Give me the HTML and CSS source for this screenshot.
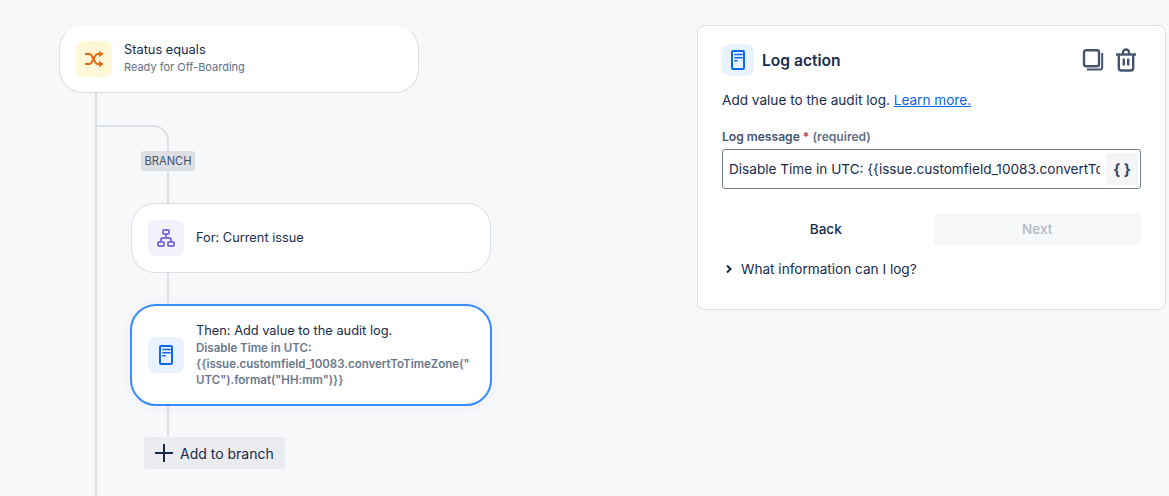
FILE: index.html
```html
<!DOCTYPE html>
<html lang="en">
<head>
<meta charset="utf-8">
<title>Log action</title>
<link rel="stylesheet" href="styles.css">
</head>
<body>
<main class="page">
  <section class="flow">
    <span class="line trunk"></span>
    <span class="line elbow"></span>
    <span class="line drop-a"></span>
    <span class="chip">BRANCH</span>

    <div class="node node-status">
      <span class="tile tile-yellow">
        <svg width="20" height="20" viewBox="0 0 20 20" fill="none" stroke="#e56910" stroke-width="2"><path d="M1 5h4.500c1 0 1.500.5 2 1.500l4 7c.5 1 1 1.500 2 1.500h4"/><path d="M1 15h4.500c1 0 1.500-.5 2-1.500l4-7c.5-1 1-1.500 2-1.500h4"/><path d="M15.500 2.500V7.500l3.500-2.500zM15.500 12.500v5l3.500-2.500z" fill="#e56910" stroke-width="1"/></svg>
      </span>
      <div class="node-text">
        <div class="node-title">Status equals</div>
        <div class="node-sub">Ready for Off-Boarding</div>
      </div>
    </div>

    <div class="node node-for">
      <span class="tile tile-purple">
        <svg width="20" height="20" viewBox="0 0 20 20" fill="none" stroke="#8270db" stroke-width="2"><rect x="7" y="2" width="6" height="4" rx="1"/><rect x="2" y="14" width="6" height="4" rx="1"/><rect x="12" y="14" width="6" height="4" rx="1"/><path d="M10 6v4M5 14v-2.500c0-1 .5-1.500 1.500-1.500h7c1 0 1.500.5 1.500 1.500V14"/></svg>
      </span>
      <div class="node-text">
        <div class="node-title">For: Current issue</div>
      </div>
    </div>

    <div class="node node-then">
      <span class="tile tile-blue">
        <svg width="20" height="20" viewBox="0 0 20 20" fill="none"><rect x="4" y="1" width="12" height="18" rx="1" stroke="#1068ec" stroke-width="2"/><path d="M6.300 4.500h8.400M6.300 7.700h8.400M6.300 10.800h3.400" stroke="#1068ec" stroke-width="1.500"/></svg>
      </span>
      <div class="node-text">
        <div class="node-title">Then: Add value to the audit log.</div>
        <div class="node-detail">Disable Time in UTC: {{issue.customfield_10083.convertToTimeZone("<br>UTC").format("HH:mm")}}</div>
      </div>
    </div>

    <span class="line drop-b"></span>
    <span class="line drop-c"></span>

    <button class="add-branch" type="button">
      <svg width="20" height="20" viewBox="0 0 20 20" fill="none" stroke="#172b4d" stroke-width="2"><path d="M10 1v18M1 10h18"/></svg>
      <span>Add to branch</span>
    </button>
  </section>

  <aside class="panel">
    <header class="panel-head">
      <span class="tile-small">
        <svg width="20" height="20" viewBox="0 0 20 20" fill="none"><rect x="4" y="1" width="12" height="18" rx="1" stroke="#1068ec" stroke-width="2"/><path d="M6.300 4.500h8.400M6.300 7.700h8.400M6.300 10.800h3.400" stroke="#1068ec" stroke-width="1.500"/></svg>
      </span>
      <h2 class="panel-title">Log action</h2>
      <span class="panel-tools">
        <svg width="22" height="22" viewBox="0 0 22 22" fill="none" stroke="#44546f"><rect x="2" y="1.200" width="15" height="16" rx="2" stroke-width="2.400"/><path d="M20.200 4v14c0 1.500-.8 2.500-2.200 2.500H5" stroke-width="2"/></svg>
        <svg width="22" height="24" viewBox="0 0 22 24" fill="none" stroke="#44546f" stroke-width="2.400"><path d="M1 6.500h20"/><path d="M8 6.500V4.500a3 3 0 0 1 6 0v2"/><path d="M3.800 6.500V20c0 1.500 1 2.500 2.500 2.500h9.400c1.500 0 2.500-1 2.500-2.500V6.500"/><path d="M8.800 10.500v7M13.200 10.500v7"/></svg>
      </span>
    </header>
    <p class="panel-desc">Add value to the audit log. <a class="link" href="#">Learn more.</a></p>
    <div class="field-label">Log message<span class="star"> *</span> <span class="req">(required)</span></div>
    <div class="field">
      <span class="field-value">Disable Time in UTC: {{issue.customfield_10083.convertToTimeZone("UTC").format("HH:mm")}}</span>
      <span class="braces">{ }</span>
    </div>
    <div class="actions">
      <button class="btn btn-back" type="button">Back</button>
      <button class="btn btn-next" type="button">Next</button>
    </div>
    <div class="disclosure">
      <svg width="8" height="10" viewBox="0 0 8 10" fill="none" stroke="#172b4d" stroke-width="2"><path d="M2 1.500 5.500 5 2 8.500"/></svg>
      <span>What information can I log?</span>
    </div>
  </aside>
</main>
</body>
</html>
```
FILE: styles.css
```css
* { box-sizing: border-box; }
html, body { margin: 0; height: 496px; overflow: hidden; }
body {
  background: #f7f8f9;
  color: #172b4d;
  font-family: Inter, "Liberation Sans", sans-serif;
  font-size: 13px;
}
.page { display: flex; height: 496px; padding-top: 25px; }

.flow { position: relative; width: 697px; flex: none; padding-left: 59px; }
.line { position: absolute; border: 0 solid #dcdfe4; }
.trunk { left: 95px; top: 67px; height: 420px; border-left-width: 2px; }
.elbow { left: 96px; top: 100px; width: 73px; height: 60px; border-top-width: 2px; border-right-width: 2px; border-top-right-radius: 16px; }
.drop-a { left: 167px; top: 140px; height: 40px; border-left-width: 2px; }
.drop-b { left: 167px; top: 247px; height: 32px; border-left-width: 2px; }
.drop-c { left: 167px; top: 381px; height: 32px; border-left-width: 2px; }

.chip {
  position: absolute; left: 141px; top: 126px;
  height: 20px; width: 54px;
  display: flex; align-items: center; justify-content: center;
  background: #dcdfe4; color: #44546f; border-radius: 3px;
  font-size: 11.200px;
}

.node {
  position: relative;
  display: flex; align-items: center; gap: 12px;
  background: #fff;
  border: 1px solid #dcdfe4;
  border-radius: 24px;
}
.node-status { width: 360px; height: 68px; padding-left: 16px; border-top-color: #f7f8f9; }
.node-status .node-text { margin-bottom: 2px; }
.node-for { width: 360px; height: 70px; margin: 110px 0 0 72px; padding-left: 16px; }
.node-then {
  width: 362px; height: 102px; margin: 31px 0 0 71px; padding-left: 16px;
  border: 2px solid #388bff; border-radius: 26px;
  box-shadow: 0 0 0 6px #f3f5f8;
}
.tile, .tile-small { flex: none; display: flex; align-items: center; justify-content: center; border-radius: 8px; }
.tile { width: 36px; height: 36px; }
.tile-yellow { background: #fff7d6; }
.tile-purple { background: #f2f2fc; }
.tile-blue { background: #e9f2ff; }
.node-title { font-size: 12.800px; line-height: 16px; color: #172b4d; }
.node-sub { font-size: 11px; line-height: 14px; color: #626f86; margin-top: 2px; }
.node-detail { font-size: 11.500px; font-weight: 600; line-height: 16px; color: #6b778c; margin-top: 1px; }

.add-branch {
  display: flex; align-items: center; gap: 6px;
  position: relative;
  width: 141px; height: 32px; margin: 31px 0 0 85px; padding: 0 0 0 10px;
  border: 0; border-radius: 3px; background: #ebecf0;
  color: #172b4d; font: 400 14px Inter, "Liberation Sans", sans-serif;
}

.panel {
  width: 469px; height: 285px; flex: none;
  background: #fff; border: 1px solid #dcdfe4; border-radius: 8px;
  padding: 18px 24px 0;
}
.panel-head { display: flex; align-items: center; gap: 8px; height: 32px; }
.tile-small { width: 32px; height: 32px; background: #e9f2ff; }
.panel-title { margin: 0; font-size: 15.600px; font-weight: 600; color: #172b4d; }
.panel-tools { margin-left: auto; display: flex; align-items: center; gap: 11px; margin-right: 4px; }
.panel-desc { margin: 15px 0 0; font-size: 13.600px; line-height: 18px; color: #172b4d; }
.link { color: #0c66e4; }
.field-label { margin-top: 21px; font-size: 12.100px; font-weight: 600; line-height: 14px; color: #44546f; }
.star { color: #c9372c; }
.req { color: #626f86; }
.field {
  display: flex; align-items: center; gap: 6px;
  width: 419px; height: 40px; margin-top: 5px; padding: 0 2px 0 6px;
  border: 1px solid #758195; border-radius: 3px;
}
.field-value { flex: 1; min-width: 0; overflow: hidden; white-space: nowrap; font-size: 13.600px; color: #172b4d; }
.braces {
  flex: none; width: 32px; height: 32px;
  display: flex; align-items: center; justify-content: center;
  background: #f4f5f7; border-radius: 3px;
  font-size: 15px; font-weight: 700; color: #344563;
}
.actions { display: flex; gap: 4px; width: 419px; margin-top: 24px; }
.btn { flex: 1; height: 32px; border: 0; border-radius: 3px; font: 500 13.600px Inter, "Liberation Sans", sans-serif; }
.btn-back { background: transparent; color: #172b4d; }
.btn-next { background: #f7f8f9; color: #b3b9c4; }
.disclosure { display: flex; align-items: center; gap: 8px; margin-top: 16px; padding-left: 3px; font-size: 13.600px; line-height: 16px; color: #172b4d; }
```
